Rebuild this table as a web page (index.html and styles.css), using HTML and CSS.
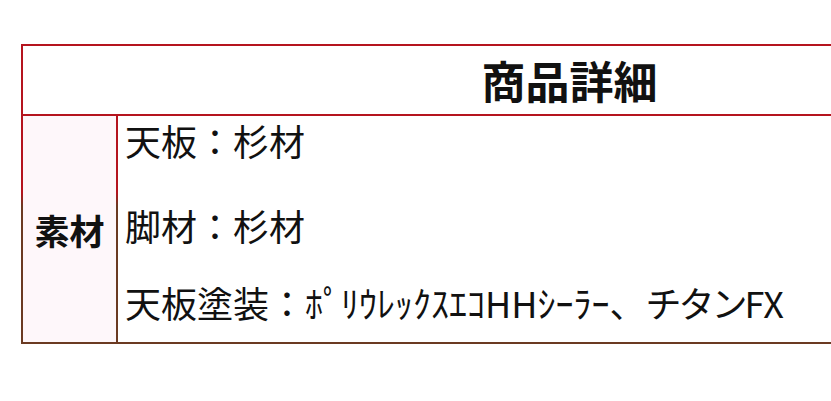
FILE: index.html
```html
<!DOCTYPE html>
<html lang="ja">
<head>
<meta charset="utf-8">
<title>商品詳細</title>
<link rel="stylesheet" href="styles.css">
</head>
<body>
<div class="sheet">
  <div class="head">商品詳細</div>
  <div class="row">
    <div class="label">素材</div>
    <div class="content">
      <p class="line first">天板：杉材</p>
      <p class="line second">脚材：杉材</p>
      <p class="line third">天板塗装：ﾎﾟﾘｳﾚｯｸｽｴｺHHｼｰﾗｰ、<span class="tight">チタン</span>FX</p>
    </div>
  </div>
</div>
</body>
</html>
```

FILE: styles.css
```css
html, body {
  margin: 0;
  padding: 0;
  background: #ffffff;
  overflow: hidden;
}

body {
  font-family: "Noto Sans CJK JP", "Noto Sans", sans-serif;
  color: #111111;
}

.sheet {
  width: 1097px;
  margin: 44px 0 0 21px;
}

.head {
  height: 68px;
  border: 2px solid #b5141e;
  display: flex;
  align-items: center;
  justify-content: center;
  font-size: 44px;
  font-weight: 700;
  line-height: 1;
}

.row {
  display: flex;
  height: 226px;
  border-style: solid;
  border-width: 0 2px 2px 2px;
  border-image: linear-gradient(to bottom, #b5141e 0%, #b5141e 34%, #6b3a22 40%, #6b3a22 100%) 1;
}

.label {
  width: 93px;
  flex: none;
  display: flex;
  align-items: center;
  justify-content: center;
  font-size: 35px;
  font-weight: 700;
  line-height: 1;
  background: #fef7fa;
  border-style: solid;
  border-width: 0 2px 0 0;
  border-image: linear-gradient(to bottom, #b5141e 0%, #b5141e 34%, #6b3a22 40%, #6b3a22 100%) 1;
}

.content {
  flex: 1;
  padding: 6px 0 0 7px;
}

.line {
  margin: 0;
  font-size: 36px;
  line-height: 36px;
  white-space: nowrap;
}

.first {
  margin-bottom: 49px;
}

.second {
  margin-bottom: 41px;
}

.tight {
  letter-spacing: -3px;
}
```
